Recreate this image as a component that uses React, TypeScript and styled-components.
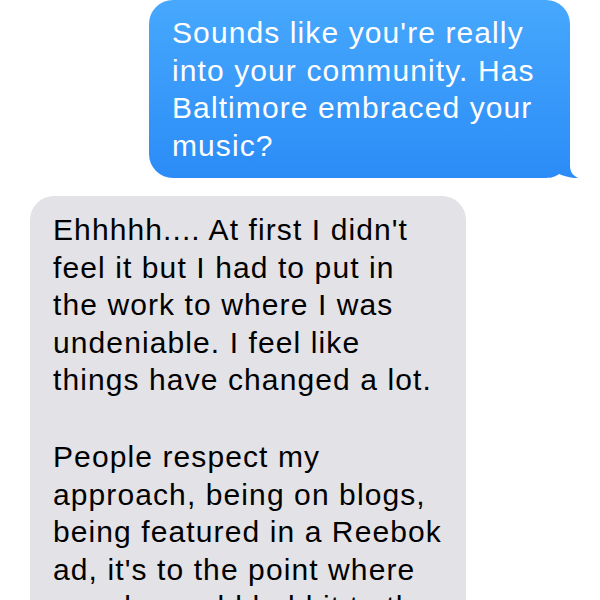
import React from "react";
import styled, { createGlobalStyle } from "styled-components";

const Global = createGlobalStyle`
  html, body {
    margin: 0;
    padding: 0;
    background: #ffffff;
    overflow: hidden;
  }
`;

const Thread = styled.div({
  width: "600px",
  height: "600px",
  display: "flex",
  flexDirection: "column",
  gap: "18px",
  padding: "0 30px",
  boxSizing: "border-box",
  fontFamily: '"Liberation Sans", Arial, sans-serif',
  overflow: "hidden",
});

const Bubble = styled.div<{ $sent?: boolean; $width: number }>`
  position: relative;
  flex-shrink: 0;
  box-sizing: border-box;
  width: ${(p) => p.$width}px;
  align-self: ${(p) => (p.$sent ? "flex-end" : "flex-start")};
  padding: ${(p) => (p.$sent ? "14px 23px" : "15px 23px 14px")};
  border-radius: 24px;
  font-size: 30px;
  letter-spacing: 1.1px;
  line-height: 37.5px;
  white-space: nowrap;
  color: ${(p) => (p.$sent ? "#ffffff" : "#000000")};
  background: ${(p) =>
    p.$sent ? "linear-gradient(to bottom, #47a8fd 0%, #2b8cf7 100%)" : "#e2e2e7"};
`;

const Para = styled.p({
  margin: 0,
  "& + &": {
    marginTop: "39.5px",
  },
});

const Tail = styled.svg({
  position: "absolute",
  right: "-10px",
  bottom: "-2px",
  width: "30px",
  height: "30px",
});

const lines = (text: string[]) =>
  text.map((t, i) => (
    <React.Fragment key={i}>
      {t}
      {i < text.length - 1 && <br />}
    </React.Fragment>
  ));

export default function App() {
  return (
    <>
      <Global />
      <Thread>
        <Bubble $sent $width={421}>
          <Para>
            {lines(["Sounds like you're really", "into your community. Has", "Baltimore embraced your", "music?"])}
          </Para>
          <Tail viewBox="0 0 30 30">
            <defs>
              <linearGradient id="tailFill" gradientUnits="userSpaceOnUse" x1="0" y1="-150" x2="0" y2="28">
                <stop offset="0" stopColor="#47a8fd" />
                <stop offset="1" stopColor="#2b8cf7" />
              </linearGradient>
            </defs>
            <path
              d="M0 0 H20 V15 C20 22 23 26 28.5 28 C24 28.5 11 26 8 23 C5 26 2 27.5 0 27.8 Z"
              fill="url(#tailFill)"
            />
          </Tail>
        </Bubble>
        <Bubble $width={436}>
          <Para>
            {lines([
              "Ehhhhh.... At first I didn't",
              "feel it but I had to put in",
              "the work to where I was",
              "undeniable. I feel like",
              "things have changed a lot.",
            ])}
          </Para>
          <Para>
            {lines([
              "People respect my",
              "approach, being on blogs,",
              "being featured in a Reebok",
              "ad, it's to the point where",
              "people would hold it to the",
            ])}
          </Para>
        </Bubble>
      </Thread>
    </>
  );
}
